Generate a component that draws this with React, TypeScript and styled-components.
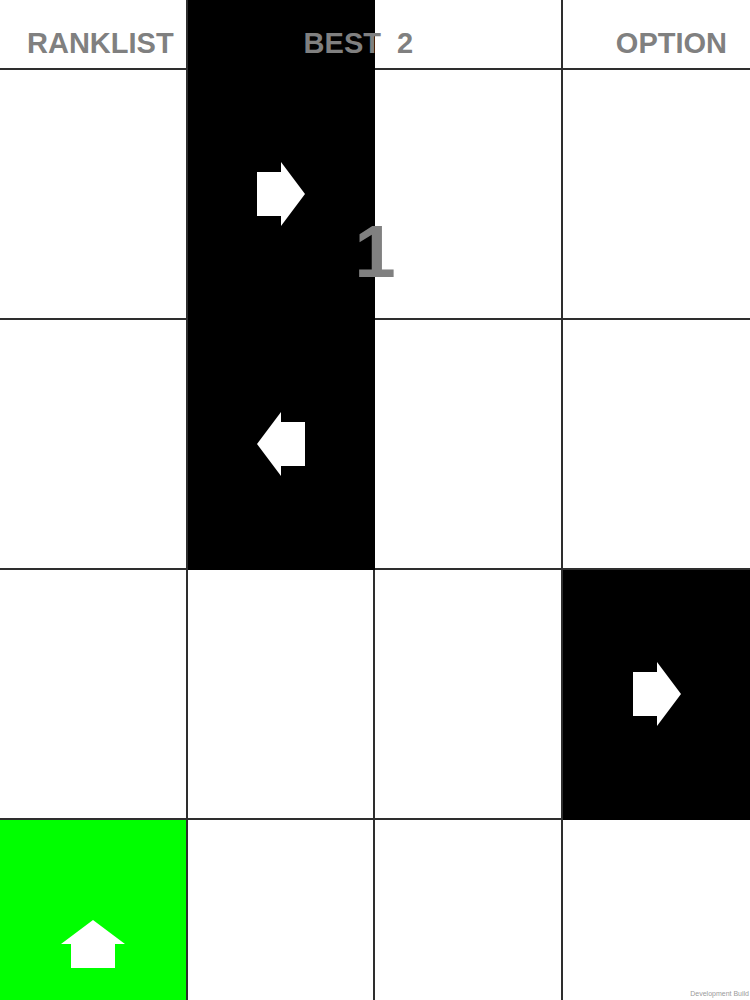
import styled, { createGlobalStyle } from 'styled-components';

type Dir = 'right' | 'left' | 'up';

interface CellData {
  tone: 'white' | 'black' | 'green';
  arrow?: Dir;
}

const rows: CellData[][] = [
  [{ tone: 'white' }, { tone: 'black' }, { tone: 'white' }, { tone: 'white' }],
  [{ tone: 'white' }, { tone: 'black', arrow: 'right' }, { tone: 'white' }, { tone: 'white' }],
  [{ tone: 'white' }, { tone: 'black', arrow: 'left' }, { tone: 'white' }, { tone: 'white' }],
  [{ tone: 'white' }, { tone: 'white' }, { tone: 'white' }, { tone: 'black', arrow: 'right' }],
  [{ tone: 'green', arrow: 'up' }, { tone: 'white' }, { tone: 'white' }, { tone: 'white' }],
];

const toneColor = {
  white: '#ffffff',
  black: '#000000',
  green: '#00ff00',
};

const Arrow = ({ dir }: { dir: Dir }) => (
  <ArrowSvg $dir={dir} width="48" height="64" viewBox="0 0 48 64">
    <polygon points="0,10 24,10 24,0 48,32 24,64 24,54 0,54" fill="#ffffff" />
  </ArrowSvg>
);

const App = () => {
  return (
    <Screen>
      <GlobalStyle />
      <Board>
        {rows.map((row, r) =>
          row.map((cell, c) => (
            <Cell key={`${r}-${c}`} $tone={cell.tone} $lastCol={c === 3}>
              {cell.arrow && <Arrow dir={cell.arrow} />}
            </Cell>
          ))
        )}
      </Board>
      <Header>
        <Label>RANKLIST</Label>
        <BestLabel>BEST&nbsp;&nbsp;2</BestLabel>
        <Spacer />
        <Label>OPTION</Label>
      </Header>
      <Score>1</Score>
      <BuildTag>Development Build</BuildTag>
    </Screen>
  );
};

export default App;

const GlobalStyle = createGlobalStyle`
  html, body {
    margin: 0;
    padding: 0;
    background: #ffffff;
    overflow: hidden;
  }
  * {
    box-sizing: border-box;
  }
`;

const Screen = styled.div`
  position: relative;
  width: 750px;
  height: 1000px;
  overflow: hidden;
  font-family: 'Liberation Sans', Arial, sans-serif;
`;

const Board = styled.div`
  display: grid;
  grid-template-columns: 188px 187px 188px 187px;
  grid-template-rows: 70px repeat(4, 250px);
`;

const Cell = styled.div<{ $tone: 'white' | 'black' | 'green'; $lastCol: boolean }>`
  display: flex;
  align-items: center;
  justify-content: center;
  background: ${p => toneColor[p.$tone]};
  border-bottom: 2px solid ${p => (p.$tone === 'black' ? '#000000' : '#2e2e2e')};
  border-right: ${p =>
    p.$lastCol ? 'none' : `2px solid ${p.$tone === 'black' ? '#000000' : '#2e2e2e'}`};
`;

const ArrowSvg = styled.svg<{ $dir: Dir }>`
  display: block;
  transform: rotate(
    ${p => (p.$dir === 'left' ? '180deg' : p.$dir === 'up' ? '-90deg' : '0deg')}
  );
`;

const Header = styled.div`
  position: absolute;
  top: 0;
  left: 0;
  right: 0;
  display: flex;
  padding: 29px 23px 0 27px;
`;

const Label = styled.div`
  font-size: 29px;
  line-height: 29px;
  font-weight: 700;
  color: #808080;
  white-space: nowrap;
`;

const BestLabel = styled(Label)`
  margin-left: 130px;
`;

const Spacer = styled.div`
  flex: 1;
`;

const Score = styled.div`
  position: absolute;
  top: 215px;
  left: 375px;
  transform: translateX(-50%);
  font-size: 74px;
  line-height: 74px;
  font-weight: 700;
  color: #808080;
`;

const BuildTag = styled.div`
  position: absolute;
  right: 1px;
  bottom: 3px;
  font-size: 7px;
  color: #9a9a9a;
  white-space: nowrap;
`;
